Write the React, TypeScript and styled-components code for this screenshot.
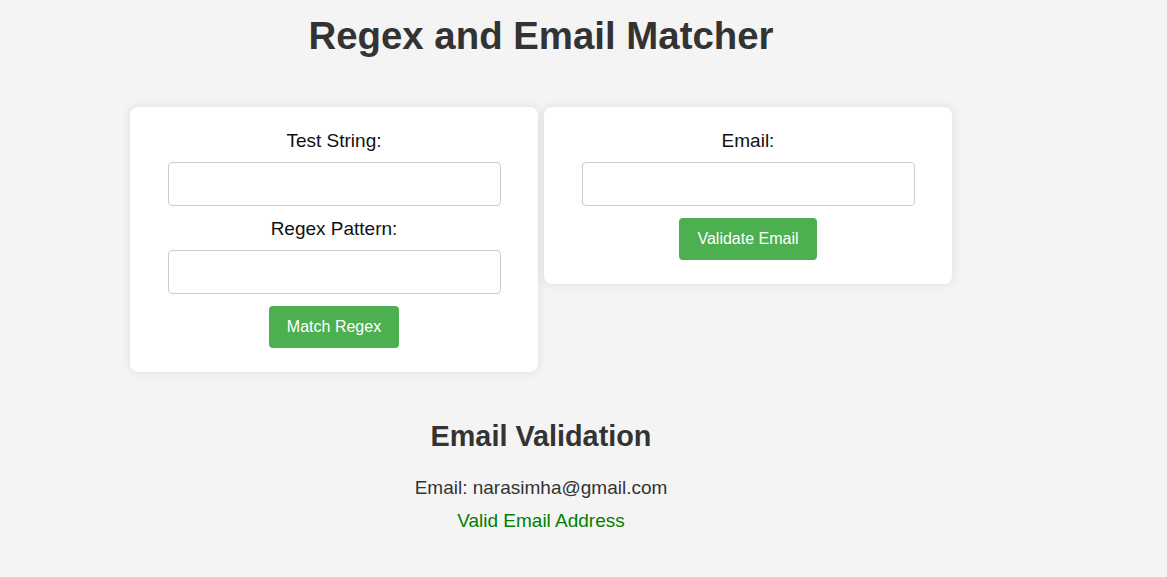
import styled, { createGlobalStyle } from "styled-components";

const GlobalStyle = createGlobalStyle`
  * {
    box-sizing: border-box;
  }
  body {
    margin: 0;
    background-color: #f4f4f4;
    font-family: "Liberation Sans", Arial, sans-serif;
  }
`;

export default function App() {
  return (
    <>
      <GlobalStyle />
      <Page>
        <Title>Regex and Email Matcher</Title>
        <Cards>
          <Card>
            <Label htmlFor="test-string">Test String:</Label>
            <Input id="test-string" type="text" />
            <Label htmlFor="regex-pattern">Regex Pattern:</Label>
            <Input id="regex-pattern" type="text" />
            <Button type="button">Match Regex</Button>
          </Card>
          <Card>
            <Label htmlFor="email">Email:</Label>
            <Input id="email" type="text" />
            <Button type="button">Validate Email</Button>
          </Card>
        </Cards>
        <Result>
          <SubTitle>Email Validation</SubTitle>
          <ResultLine>Email: narasimha@gmail.com</ResultLine>
          <ResultLine $tone="valid">Valid Email Address</ResultLine>
        </Result>
      </Page>
    </>
  );
}

const Page = styled.main`
  width: 1082px;
  display: flex;
  flex-direction: column;
  align-items: center;
`;
const Title = styled.h1`
  margin: 14px 0 49px;
  font-size: 38.4px;
  font-weight: bold;
  color: #333;
`;
const Cards = styled.div`
  display: flex;
  align-items: flex-start;
  gap: 6px;
`;
const Card = styled.section`
  width: 408px;
  display: flex;
  flex-direction: column;
  align-items: center;
  padding: 23px 0 24px;
  background-color: #fff;
  border-radius: 8px;
  box-shadow: 0 0 10px rgba(0, 0, 0, 0.1);
`;
const Label = styled.label`
  display: block;
  margin-bottom: 10px;
  font-size: 19px;
  color: #111;
`;
const Input = styled.input`
  width: 333px;
  height: 44px;
  margin-bottom: 12px;
  padding: 10px;
  border: 1px solid #ccc;
  border-radius: 4px;
  font-size: 16px;
  font-family: inherit;
  background-color: #fff;
`;
const Button = styled.button`
  padding: 12px 18px;
  border: none;
  border-radius: 4px;
  background-color: #4caf50;
  color: #fff;
  font-size: 16px;
  font-family: inherit;
  line-height: 18px;
  cursor: pointer;
`;
const Result = styled.div`
  margin-top: 48px;
  display: flex;
  flex-direction: column;
  align-items: center;
`;
const SubTitle = styled.h2`
  margin: 0 0 24px;
  font-size: 28.8px;
  font-weight: bold;
  color: #333;
`;
const ResultLine = styled.p<{ $tone?: "valid" | "invalid" }>`
  margin: 0 0 11px;
  font-size: 19px;
  color: ${({ $tone }) =>
    $tone === "valid" ? "#008000" : $tone === "invalid" ? "#d00" : "#333"};
`;
